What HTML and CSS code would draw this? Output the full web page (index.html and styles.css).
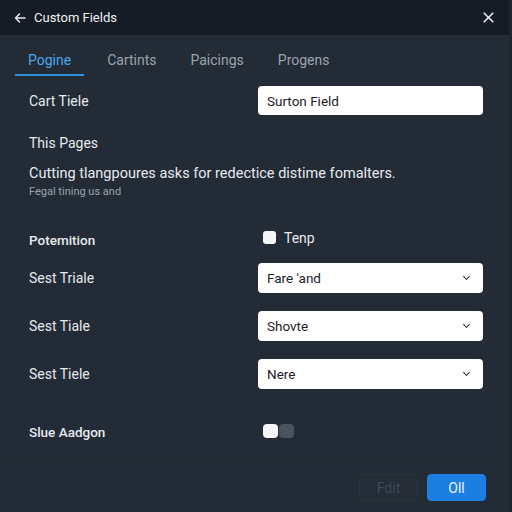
FILE: index.html
```html
<!DOCTYPE html>
<html lang="en">
<head>
    <meta charset="UTF-8">
    <meta name="viewport" content="width=device-width, initial-scale=1.0">
    <title>Custom Fields</title>
    <link rel="stylesheet" href="styles.css">
</head>
<body>
    <div class="dialog">
        <!-- Header -->
        <div class="topbar">
            <div class="title">
                <svg class="icon" width="12" height="12" viewBox="0 0 12 12"><path d="M11 6H1.5M5.5 2L1.5 6l4 4" fill="none" stroke="#e8ecf0" stroke-width="1.5" stroke-linecap="round" stroke-linejoin="round"/></svg>
                <span>Custom Fields</span>
            </div>
            <svg class="icon" width="11" height="11" viewBox="0 0 11 11"><path d="M1.2 1.2l8.6 8.6M9.8 1.2l-8.6 8.6" stroke="#e8ecf0" stroke-width="1.6" stroke-linecap="round"/></svg>
        </div>

        <!-- Tabs -->
        <div class="tabs">
            <div class="tab active">Pogine</div>
            <div class="tab">Cartints</div>
            <div class="tab">Paicings</div>
            <div class="tab">Progens</div>
        </div>

        <!-- Form -->
        <div class="form">
            <div class="row first">
                <label>Cart Tiele</label>
                <div class="input">Surton Field</div>
            </div>
            <div class="heading">This Pages</div>
            <p class="desc">Cutting tlangpoures asks for redectice distime fomalters.</p>
            <p class="hint">Fegal tining us and</p>

            <div class="row check-row">
                <label class="bold">Potemition</label>
                <div class="check"><span class="box"></span>Tenp</div>
            </div>
            <div class="row select-first">
                <label>Sest Triale</label>
                <div class="input select">Fare 'and<span class="chev"></span></div>
            </div>
            <div class="row select-row">
                <label>Sest Tiale</label>
                <div class="input select">Shovte<span class="chev"></span></div>
            </div>
            <div class="row select-row">
                <label>Sest Tiele</label>
                <div class="input select">Nere<span class="chev"></span></div>
            </div>
            <div class="row toggle-row">
                <label class="bold">Slue Aadgon</label>
                <div class="toggle"><span class="on"></span><span class="off"></span></div>
            </div>
        </div>

        <!-- Footer -->
        <div class="footer">
            <button class="btn ghost">Fdit</button>
            <button class="btn primary">Oll</button>
        </div>
    </div>
</body>
</html>
```

FILE: styles.css
```css
/* Global */
body {
    margin: 0;
    font-family: 'Roboto', 'Noto Sans', sans-serif;
    background: #222b36;
    color: #e6eaee;
    height: 512px;
    overflow: hidden;
}

p {
    margin: 0;
}

.dialog {
    display: flex;
    flex-direction: column;
    height: 512px;
    border-right: 3px solid #1d252f;
}

/* Header */
.topbar {
    height: 35px;
    background: #161c25;
    display: flex;
    align-items: center;
    justify-content: space-between;
    padding: 0 15px 0 14px;
}

.title {
    display: flex;
    align-items: center;
    gap: 8px;
    font-size: 13px;
    color: #eef1f4;
}

/* Tabs */
.tabs {
    display: flex;
    padding: 0 15px;
    height: 41px;
    align-items: flex-end;
}

.tab {
    font-size: 14px;
    color: #9aa3ad;
    padding: 0 13px 8px;
    margin-right: 8px;
}

.tab.active {
    color: #4da6ea;
    border-bottom: 2px solid #2f8fdb;
    padding: 0 13px 6px;
    margin-right: 10px;
}

/* Form */
.form {
    padding: 0 26px 0 29px;
    flex: 1;
}

.row {
    display: grid;
    grid-template-columns: 229px 1fr;
    align-items: center;
    margin-top: 19px;
}

.row.first {
    margin-top: 10px;
}

label {
    font-size: 14px;
    color: #e6eaee;
}

.bold {
    font-weight: 500;
    font-size: 13.5px;
}

.input {
    background: #fff;
    color: #1c2228;
    height: 29px;
    border-radius: 4px;
    display: flex;
    align-items: center;
    padding: 0 9px;
    font-size: 13.5px;
    position: relative;
}

.select {
    height: 30px;
}

.chev {
    position: absolute;
    right: 14px;
    top: 11px;
    width: 4px;
    height: 4px;
    border-right: 1.8px solid #2a2f35;
    border-bottom: 1.8px solid #2a2f35;
    transform: rotate(45deg);
}

.heading {
    font-size: 14px;
    margin-top: 20px;
}

.desc {
    font-size: 14.5px;
    margin-top: 14px;
}

.hint {
    font-size: 11px;
    color: #9aa3ad;
    margin-top: 3px;
}

.check-row {
    margin-top: 34px;
}

.check {
    display: flex;
    align-items: center;
    gap: 8px;
    font-size: 14px;
    padding-left: 5px;
    margin-top: -5px;
}

.box {
    width: 13px;
    height: 13px;
    background: #f4f5f7;
    border-radius: 3px;
}

.row.select-first {
    margin-top: 15px;
}

.row.select-row {
    margin-top: 18px;
}

.toggle-row {
    margin-top: 35px;
}

.toggle {
    display: flex;
    padding-left: 5px;
    margin-top: -3px;
}

.toggle span {
    width: 15px;
    height: 14px;
    border-radius: 4px;
}

.toggle .on {
    background: #f4f5f7;
}

.toggle .off {
    background: #4a535d;
    margin-left: 1px;
}

/* Footer */
.footer {
    display: flex;
    justify-content: flex-end;
    gap: 9px;
    padding: 12px 23px 11px;
    border-top: 1px solid #1f2731;
}

.btn {
    font-family: inherit;
    font-size: 14px;
    height: 27px;
    width: 59px;
    border-radius: 4px;
    border: 1px solid #2a323c;
}

.ghost {
    background: #232c37;
    color: #3f4953;
}

.primary {
    background: #1a7fe0;
    border-color: #1a7fe0;
    color: #eaf3fc;
}
```
